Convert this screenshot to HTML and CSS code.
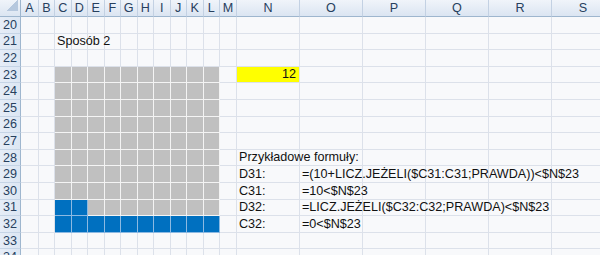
FILE: index.html
```html
<!DOCTYPE html>
<html>

<head>
    <meta charset="utf-8">
    <title>Sposób 2</title>

    <link rel="stylesheet" href="styles.css">
</head>

<body>

    <table class="sheet">
        <colgroup>
            <col class="col-head">
            <col class="col-a">
            <col class="col-b">
            <col class="col-n"><col class="col-n"><col class="col-n"><col class="col-n"><col class="col-n">
            <col class="col-n"><col class="col-n"><col class="col-n"><col class="col-n"><col class="col-n">
            <col class="col-m">
            <col class="col-w"><col class="col-w"><col class="col-w"><col class="col-w"><col class="col-w"><col class="col-w">
        </colgroup>

        <tr class="head-row">
            <th class="corner"><span class="corner-mark"></span></th>
            <th>A</th><th>B</th><th>C</th><th>D</th><th>E</th><th>F</th><th>G</th><th>H</th><th>I</th>
            <th>J</th><th>K</th><th>L</th><th>M</th><th>N</th><th>O</th><th>P</th><th>Q</th><th>R</th><th>S</th>
        </tr>

        <tr>
            <th>20</th>
            <td></td><td></td><td></td><td></td><td></td><td></td><td></td><td></td><td></td><td></td>
            <td></td><td></td><td></td><td></td><td></td><td></td><td></td><td></td><td></td>
        </tr>
        <tr>
            <th>21</th>
            <td></td><td></td><td class="txt">Sposób 2</td><td></td><td></td><td></td><td></td><td></td><td></td><td></td>
            <td></td><td></td><td></td><td></td><td></td><td></td><td></td><td></td><td></td>
        </tr>
        <tr>
            <th>22</th>
            <td></td><td></td><td></td><td></td><td></td><td></td><td></td><td></td><td></td><td></td>
            <td></td><td></td><td></td><td></td><td></td><td></td><td></td><td></td><td></td>
        </tr>

        <!-- grey block C23:L32 -->
        <tr>
            <th>23</th>
            <td></td><td></td>
            <td class="g"></td><td class="g"></td><td class="g"></td><td class="g"></td><td class="g"></td>
            <td class="g"></td><td class="g"></td><td class="g"></td><td class="g"></td><td class="g"></td>
            <td></td><td class="y num">12</td><td></td><td></td><td></td><td></td><td></td>
        </tr>
        <tr>
            <th>24</th>
            <td></td><td></td>
            <td class="g"></td><td class="g"></td><td class="g"></td><td class="g"></td><td class="g"></td>
            <td class="g"></td><td class="g"></td><td class="g"></td><td class="g"></td><td class="g"></td>
            <td></td><td></td><td></td><td></td><td></td><td></td><td></td>
        </tr>
        <tr>
            <th>25</th>
            <td></td><td></td>
            <td class="g"></td><td class="g"></td><td class="g"></td><td class="g"></td><td class="g"></td>
            <td class="g"></td><td class="g"></td><td class="g"></td><td class="g"></td><td class="g"></td>
            <td></td><td></td><td></td><td></td><td></td><td></td><td></td>
        </tr>
        <tr>
            <th>26</th>
            <td></td><td></td>
            <td class="g"></td><td class="g"></td><td class="g"></td><td class="g"></td><td class="g"></td>
            <td class="g"></td><td class="g"></td><td class="g"></td><td class="g"></td><td class="g"></td>
            <td></td><td></td><td></td><td></td><td></td><td></td><td></td>
        </tr>
        <tr>
            <th>27</th>
            <td></td><td></td>
            <td class="g"></td><td class="g"></td><td class="g"></td><td class="g"></td><td class="g"></td>
            <td class="g"></td><td class="g"></td><td class="g"></td><td class="g"></td><td class="g"></td>
            <td></td><td></td><td></td><td></td><td></td><td></td><td></td>
        </tr>
        <tr>
            <th>28</th>
            <td></td><td></td>
            <td class="g"></td><td class="g"></td><td class="g"></td><td class="g"></td><td class="g"></td>
            <td class="g"></td><td class="g"></td><td class="g"></td><td class="g"></td><td class="g"></td>
            <td></td><td class="txt">Przykładowe formuły:</td><td></td><td></td><td></td><td></td><td></td>
        </tr>
        <tr>
            <th>29</th>
            <td></td><td></td>
            <td class="g"></td><td class="g"></td><td class="g"></td><td class="g"></td><td class="g"></td>
            <td class="g"></td><td class="g"></td><td class="g"></td><td class="g"></td><td class="g"></td>
            <td></td><td class="txt">D31:</td><td class="txt">=(10+LICZ.JEŻELI($C31:C31;PRAWDA))&lt;$N$23</td>
            <td></td><td></td><td></td><td></td>
        </tr>
        <tr>
            <th>30</th>
            <td></td><td></td>
            <td class="g"></td><td class="g"></td><td class="g"></td><td class="g"></td><td class="g"></td>
            <td class="g"></td><td class="g"></td><td class="g"></td><td class="g"></td><td class="g"></td>
            <td></td><td class="txt">C31:</td><td class="txt">=10&lt;$N$23</td><td></td><td></td><td></td><td></td>
        </tr>
        <tr>
            <th>31</th>
            <td></td><td></td>
            <td class="b"></td><td class="b"></td><td class="g"></td><td class="g"></td><td class="g"></td>
            <td class="g"></td><td class="g"></td><td class="g"></td><td class="g"></td><td class="g"></td>
            <td></td><td class="txt">D32:</td><td class="txt">=LICZ.JEŻELI($C32:C32;PRAWDA)&lt;$N$23</td>
            <td></td><td></td><td></td><td></td>
        </tr>
        <tr>
            <th>32</th>
            <td></td><td></td>
            <td class="b"></td><td class="b"></td><td class="b"></td><td class="b"></td><td class="b"></td>
            <td class="b"></td><td class="b"></td><td class="b"></td><td class="b"></td><td class="b"></td>
            <td></td><td class="txt">C32:</td><td class="txt">=0&lt;$N$23</td><td></td><td></td><td></td><td></td>
        </tr>

        <tr>
            <th>33</th>
            <td></td><td></td><td></td><td></td><td></td><td></td><td></td><td></td><td></td><td></td>
            <td></td><td></td><td></td><td></td><td></td><td></td><td></td><td></td><td></td>
        </tr>
        <tr>
            <th>34</th>
            <td></td><td></td><td></td><td></td><td></td><td></td><td></td><td></td><td></td><td></td>
            <td></td><td></td><td></td><td></td><td></td><td></td><td></td><td></td><td></td>
        </tr>
    </table>

</body>

</html>
```

FILE: styles.css
```css
/* Page */

html,
body {
    margin: 0;
    height: 100%;
    overflow: hidden;
    background: #f8f9fb;
}

/* Sheet grid */

.sheet {
    table-layout: fixed;
    border-collapse: separate;
    border-spacing: 0;
    width: 615px;
    font-family: "Liberation Sans", Arial, sans-serif;
    font-size: 12.6px;
    color: #111;
}

.col-head { width: 21px; }
.col-a { width: 18px; }
.col-b { width: 16px; }
.col-n { width: 16.5px; }
.col-m { width: 17px; }
.col-w { width: 63px; }

.sheet tr {
    height: 16.6px;
}

.sheet td,
.sheet th {
    box-sizing: border-box;
    padding: 0;
    border-right: 1px solid #dce1ea;
    border-bottom: 1px solid #dce1ea;
    white-space: nowrap;
    overflow: visible;
    line-height: 14px;
}

.sheet td {
    vertical-align: bottom;
    background: #f8f9fb;
}

/* Headers */

.sheet th {
    font-weight: normal;
    text-align: center;
    vertical-align: middle;
    color: #27405e;
    background: linear-gradient(to right, #e6edf7, #dce6f3);
    border-right-color: #9eb6ce;
    border-bottom-color: #c5d4e6;
}

.head-row {
    height: 17.3px;
}

.head-row th {
    background: linear-gradient(to bottom, #f0f4fa, #dbe5f2);
    border-right-color: #c3d1e3;
    border-bottom-color: #9eb6ce;
}

.head-row th.corner {
    border-right-color: #9eb6ce;
    text-align: right;
    vertical-align: bottom;
}

.corner-mark {
    display: inline-block;
    width: 11px;
    height: 11px;
    margin: 0 2px 2px 0;
    background: linear-gradient(135deg, transparent 50%, #b6c8de 50%);
}

/* Cell content */

.txt {
    padding-left: 2px !important;
    padding-bottom: 1px !important;
}

.num {
    text-align: right;
    padding-right: 3px !important;
    padding-bottom: 1px !important;
}

/* Fills */

.sheet td.g {
    background: #c0c0c0;
    border-color: #f4f4f4;
}

.sheet td.b {
    background: #0070c0;
    border-color: #8cb9e2;
}

.sheet td.y {
    background: #ffff00;
}
```
